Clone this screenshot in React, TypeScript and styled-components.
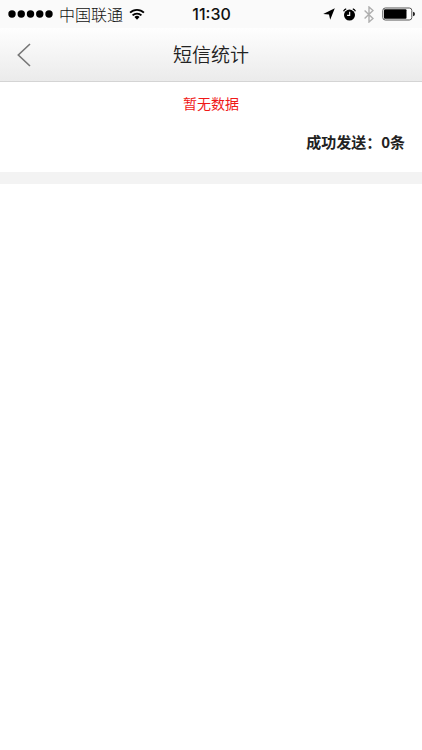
import React from "react";
import styled, { createGlobalStyle } from "styled-components";

const GlobalStyle = createGlobalStyle`
  * { box-sizing: border-box; }
  body {
    margin: 0;
    background: #fff;
    color: #222;
    font-family: "Noto Sans CJK SC", sans-serif;
  }
`;

const StatusBar = styled.div`
  display: grid;
  grid-template-columns: 1fr auto 1fr;
  align-items: center;
  height: 28px;
  padding: 0 7px 0 8px;
  background: #fafafa;
`;

const Carrier = styled.div`
  display: flex;
  align-items: center;
  gap: 6px;
`;

const CarrierName = styled.span`
  font-size: 16px;
  line-height: 28px;
  font-weight: 300;
  color: #111;
  white-space: nowrap;
`;

const Clock = styled.time`
  font: 500 16px/28px Inter, "Liberation Sans", sans-serif;
  color: #111;
`;

const Indicators = styled.div`
  display: flex;
  align-items: center;
  justify-content: flex-end;
  gap: 8px;
`;

const Icon = styled.svg`
  display: block;
  flex: none;
`;

const Header = styled.header`
  display: grid;
  grid-template-columns: 48px 1fr 48px;
  align-items: center;
  height: 54px;
  background: linear-gradient(#fefefe, #ebebeb);
  border-bottom: 1px solid #d4d4d4;
`;

const BackButton = styled.button`
  display: flex;
  align-items: center;
  justify-content: center;
  height: 53px;
  padding: 0;
  border: 0;
  background: none;
  cursor: pointer;
`;

const Title = styled.h1`
  margin: 0;
  font-size: 19px;
  line-height: 28px;
  padding-bottom: 2px;
  font-weight: 350;
  text-align: center;
`;

const Report = styled.section`
  padding: 10px 17px 18px;
  border-bottom: 12px solid #f3f3f3;
`;

const EmptyNotice = styled.p`
  margin: 0;
  font-size: 14px;
  line-height: 22px;
  text-align: center;
  color: #f01818;
`;

const Total = styled.p`
  margin: 16px 0 0;
  font-size: 15px;
  line-height: 24px;
  font-weight: 700;
  text-align: right;
`;

function SignalDots() {
  return (
    <Icon width="45" height="8" viewBox="0 0 45 8" fill="#000" aria-label="信号">
      {[4, 13.25, 22.5, 31.75, 41].map((x) => (
        <circle key={x} cx={x} cy="4" r="3.7" />
      ))}
    </Icon>
  );
}

function WifiIcon() {
  return (
    <Icon width="16" height="12" viewBox="0 0 17 13" fill="none" stroke="#000" strokeWidth="2">
      <path d="M1 5.1a10.6 10.6 0 0 1 15 0" />
      <path d="M3.7 8a6.8 6.8 0 0 1 9.6 0" />
      <path d="M8.5 12.6 5.7 9.7a4 4 0 0 1 5.6 0z" fill="#000" stroke="none" />
    </Icon>
  );
}

function LocationIcon() {
  return (
    <Icon width="12" height="12" viewBox="0 0 12 12" fill="#000">
      <path d="M11.8.3 7.2 11.8 6 6.6.2 6z" />
    </Icon>
  );
}

function AlarmIcon() {
  return (
    <Icon width="13" height="13" viewBox="0 0 13 13" fill="none">
      <circle cx="6.5" cy="7.1" r="5.5" fill="#000" />
      <path d="M.5 3.3Q1.3 1.5 3.2.9M12.5 3.3Q11.7 1.5 9.8.9" stroke="#000" strokeWidth="1.2" />
      <path d="M6.7 3.8v3.6H4.1" stroke="#fff" strokeWidth="1.1" />
    </Icon>
  );
}

function BluetoothIcon() {
  return (
    <Icon width="10" height="17" viewBox="0 0 10 17" fill="none" stroke="#aeaeae" strokeWidth="1.4">
      <path d="M.6 4.4 9 12.5 5 16V1l4 3.5L.6 12.6" />
    </Icon>
  );
}

function BatteryIcon() {
  return (
    <Icon width="33" height="14" viewBox="0 0 33 14">
      <rect x=".8" y="1" width="29" height="12" rx="2.5" fill="#fff" stroke="#555" />
      <rect x="2" y="2.3" width="22.5" height="9.4" rx="1" fill="#000" />
      <path d="M31 4.8q2 .5 2 2.2t-2 2.2z" fill="#222" />
    </Icon>
  );
}

export default function App() {
  return (
    <>
      <GlobalStyle />
      <StatusBar>
        <Carrier>
          <SignalDots />
          <CarrierName>中国联通</CarrierName>
          <WifiIcon />
        </Carrier>
        <Clock>11:30</Clock>
        <Indicators>
          <LocationIcon />
          <AlarmIcon />
          <BluetoothIcon />
          <BatteryIcon />
        </Indicators>
      </StatusBar>
      <Header>
        <BackButton type="button" aria-label="返回">
          <Icon width="14" height="24" viewBox="0 0 14 24" fill="none" stroke="#777" strokeWidth="1.6">
            <path d="M13 1 1.3 12 13 23" />
          </Icon>
        </BackButton>
        <Title>短信统计</Title>
      </Header>
      <main>
        <Report>
          <EmptyNotice>暂无数据</EmptyNotice>
          <Total>成功发送：0条</Total>
        </Report>
      </main>
    </>
  );
}
